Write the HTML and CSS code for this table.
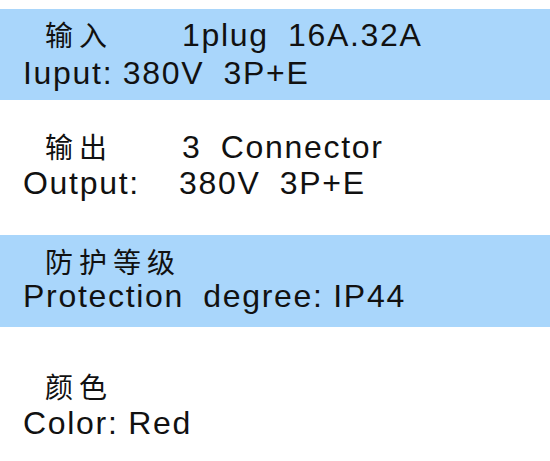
FILE: index.html
```html
<!DOCTYPE html>
<html lang="zh">
<head>
<meta charset="utf-8">
<link rel="stylesheet" href="styles.css">
</head>
<body>
<div class="page">
  <section class="spec spec-input band">
    <div class="line cn"><span class="label cn-label">输入</span><span class="value">1plug  16A.32A</span></div>
    <div class="line en">Iuput: 380V  3P+E</div>
  </section>
  <section class="spec spec-output">
    <div class="line cn"><span class="label cn-label">输出</span><span class="value">3  Connector</span></div>
    <div class="line en"><span class="label en-label">Output:</span><span class="value">380V  3P+E</span></div>
  </section>
  <section class="spec spec-protect band">
    <div class="line cn"><span class="zh">防护等级</span></div>
    <div class="line en">Protection  degree: IP44</div>
  </section>
  <section class="spec spec-color">
    <div class="line cn"><span class="zh">颜色</span></div>
    <div class="line en">Color: Red</div>
  </section>
</div>
</body>
</html>
```
FILE: styles.css
```css
html, body {
  margin: 0;
  padding: 0;
  background: #ffffff;
}
.page {
  width: 550px;
  height: 461px;
  padding-top: 9px;
  box-sizing: border-box;
  overflow: hidden;
  font-family: "Liberation Sans", "Noto Sans CJK SC", sans-serif;
  font-size: 32px;
  color: #111;
  letter-spacing: 1.7px;
  word-spacing: -1px;
}
.spec {
  display: flex;
  flex-direction: column;
}
.band {
  background: #a9d6fb;
}
.line {
  white-space: pre;
  display: flex;
  align-items: baseline;
}
.cn {
  padding-left: 45px;
}
.en {
  padding-left: 23px;
}
.label {
  display: inline-block;
  flex: none;
}
.cn-label {
  width: 137px;
  font-size: 28px;
  letter-spacing: 6px;
}
.en-label {
  width: 156px;
}
.zh {
  font-size: 28px;
  letter-spacing: 6px;
}
.spec-input {
  height: 91px;
  padding-top: 8px;
  box-sizing: border-box;
  line-height: 37px;
}
.spec-output {
  height: 135px;
  padding-top: 30px;
  box-sizing: border-box;
  line-height: 35px;
}
.spec-protect {
  height: 92px;
  padding-top: 13px;
  box-sizing: border-box;
  line-height: 32px;
}
.spec-color {
  height: 134px;
  padding-top: 45px;
  box-sizing: border-box;
  line-height: 34px;
}
```
